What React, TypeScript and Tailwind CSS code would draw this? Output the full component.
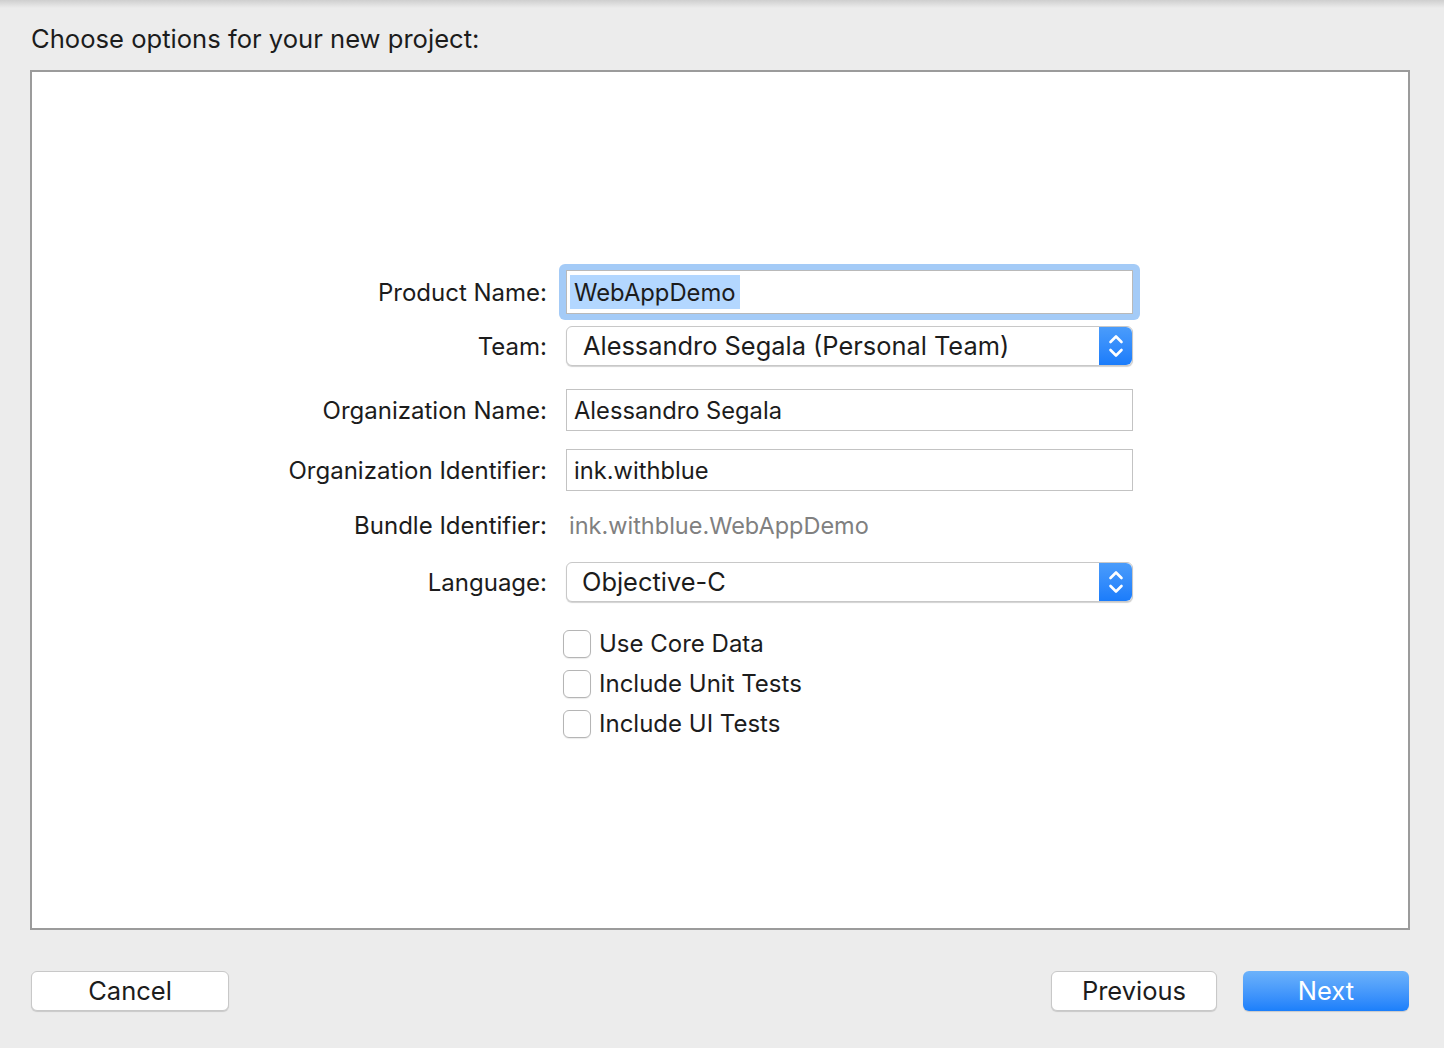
import React from 'react'

const font = { fontFamily: 'Inter, "Noto Sans", sans-serif' }

function Stepper() {
  return (
    <div className="flex h-full w-[33px] items-center justify-center rounded-r-[6px] bg-gradient-to-b from-[#4a9cfb] to-[#1a7cfb]">
      <svg width="18" height="30" viewBox="0 0 18 30" fill="none" stroke="white" strokeWidth="2.6" strokeLinecap="round" strokeLinejoin="round">
        <path d="M3.5 11 L9 5.5 L14.5 11" />
        <path d="M3.5 19 L9 24.5 L14.5 19" />
      </svg>
    </div>
  )
}

function Popup({ value, pad }: { value: string; pad: string }) {
  return (
    <div className="flex h-[40px] w-[567px] items-stretch rounded-[6px] border border-[#c8c8c8] bg-white shadow-[0_1px_1px_rgba(0,0,0,0.18)]">
      <div className={`flex flex-1 items-center ${pad} pt-[1px] text-[25.4px] text-[#1c1c1c]`}>{value}</div>
      <Stepper />
    </div>
  )
}

function Field({ value }: { value: string }) {
  return (
    <div className="flex h-[42px] w-[567px] items-center border border-[#c3c3c3] bg-white pl-[7px] pt-[2px] text-[23.7px] text-[#1c1c1c]">
      {value}
    </div>
  )
}

function Row({ label, children, className }: { label: string; children: React.ReactNode; className: string }) {
  return (
    <div className={`flex items-center ${className}`}>
      <div className="w-[534px] shrink-0 pr-[19px] pt-[2px] text-right text-[24px] text-[#1c1c1c]">{label}</div>
      <div className="flex items-center">{children}</div>
    </div>
  )
}

function Check({ label, className }: { label: string; className: string }) {
  return (
    <div className={`flex h-[28px] items-center pl-[531px] ${className}`}>
      <div className="h-[28px] w-[28px] rounded-[6px] border border-[#b5b5b5] bg-white shadow-[0_1px_1px_rgba(0,0,0,0.08)]" />
      <span className="ml-[8px] text-[24px] text-[#1c1c1c]">{label}</span>
    </div>
  )
}

export default function App() {
  return (
    <div className="relative flex h-[1048px] w-[1444px] flex-col bg-[#ececec]" style={font}>
      <div className="absolute left-0 right-0 top-0 h-[8px] bg-gradient-to-b from-[#cfcfcf] to-[#ececec]" />
      <div className="relative flex h-[70px] items-start pl-[31px] pt-[20px] text-[25.6px] text-[#1c1c1c]">
        Choose options for your new project:
      </div>

      <div className="ml-[30px] mr-[34px] h-[860px] border-2 border-[#9b9b9b] bg-white pt-[192px]">
        <Row label="Product Name:" className="h-[56px]">
          <div className="-ml-[7px] flex h-[56px] w-[581px] items-center justify-center rounded-[6px] bg-[#a4cbf7]">
            <div className="flex h-[44px] w-[567px] items-center border border-[#b9b9b9] bg-white pl-[3px] text-[23.8px] text-[#1c1c1c]">
              <span className="bg-[#b3d7ff] px-[4px] pt-[2px] leading-[32px]">WebAppDemo</span>
            </div>
          </div>
        </Row>
        <Row label="Team:" className="mt-[6px] h-[40px]">
          <Popup value="Alessandro Segala (Personal Team)" pad="pl-[16px]" />
        </Row>
        <Row label="Organization Name:" className="mt-[23px] h-[42px]">
          <Field value="Alessandro Segala" />
        </Row>
        <Row label="Organization Identifier:" className="mt-[18px] h-[42px]">
          <Field value="ink.withblue" />
        </Row>
        <Row label="Bundle Identifier:" className="mt-[19px] h-[30px]">
          <span className="pl-[3px] pt-[2px] text-[23.5px] text-[#808080]">ink.withblue.WebAppDemo</span>
        </Row>
        <Row label="Language:" className="mt-[22px] h-[40px]">
          <Popup value="Objective-C" pad="pl-[15px]" />
        </Row>
        <Check label="Use Core Data" className="mt-[28px]" />
        <Check label="Include Unit Tests" className="mt-[12px]" />
        <Check label="Include UI Tests" className="mt-[12px]" />
      </div>

      <div className="mt-[41px] flex items-center pl-[31px] pr-[35px]">
        <button className="h-[40px] w-[198px] rounded-[6px] border border-[#c8c8c8] bg-white text-[25.5px] text-[#1c1c1c] shadow-[0_1px_1px_rgba(0,0,0,0.15)]">
          Cancel
        </button>
        <div className="flex-1" />
        <button className="h-[40px] w-[166px] rounded-[6px] border border-[#c8c8c8] bg-white text-[25.5px] text-[#1c1c1c] shadow-[0_1px_1px_rgba(0,0,0,0.15)]">
          Previous
        </button>
        <button className="ml-[26px] h-[40px] w-[166px] rounded-[6px] bg-gradient-to-b from-[#6cb2fa] to-[#1a7ffb] text-[25.5px] text-white shadow-[0_1px_1px_rgba(0,0,0,0.15)]">
          Next
        </button>
      </div>
    </div>
  )
}
